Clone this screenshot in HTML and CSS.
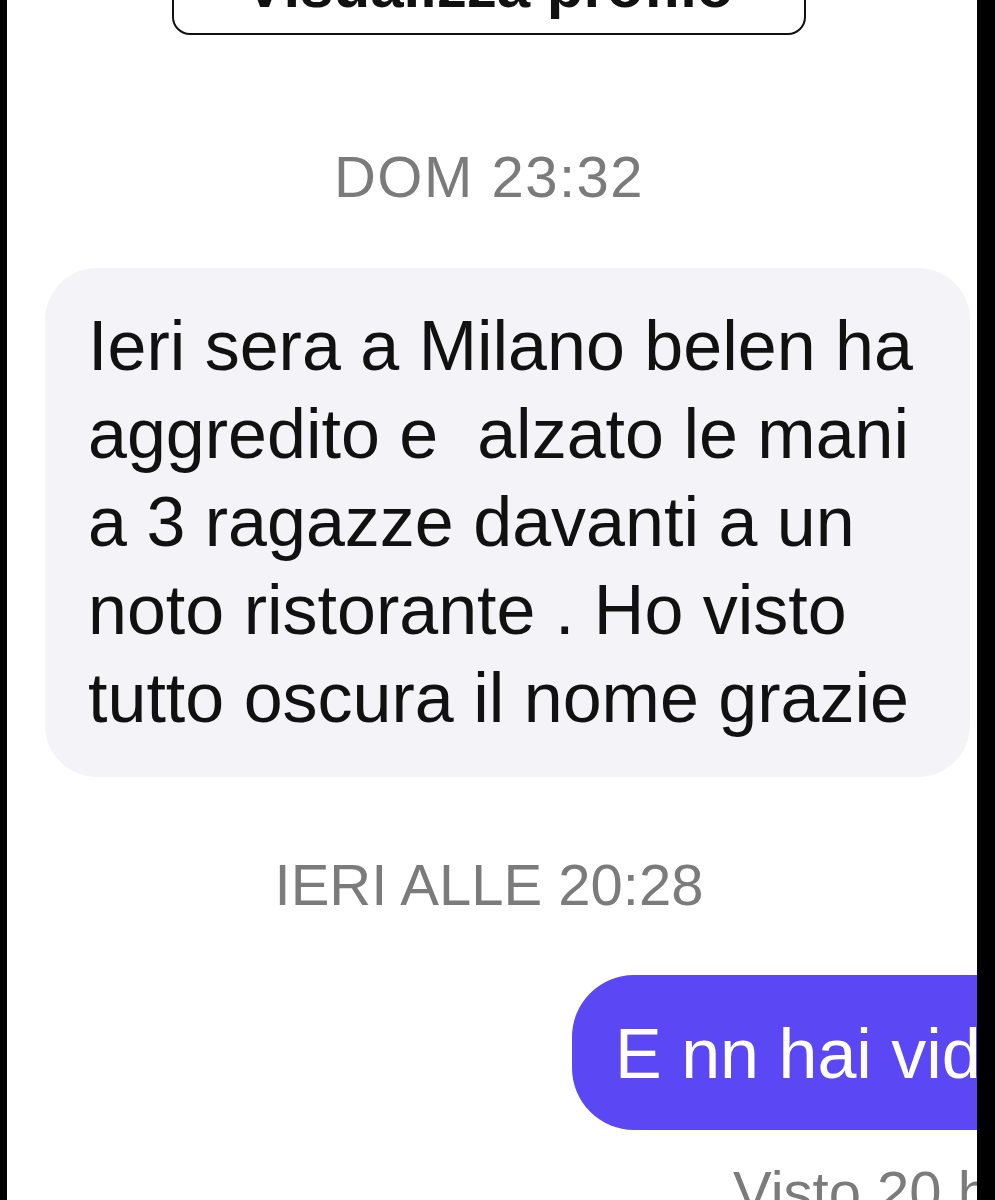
FILE: index.html
```html
<!DOCTYPE html>
<html lang="it">
<head>
    <meta charset="UTF-8">
    <meta name="viewport" content="width=device-width, initial-scale=1.0">
    <title>Messaggi</title>
    <link rel="stylesheet" href="styles.css">
</head>
<body>
    <div class="screen">
        <div class="profile-btn">Visualizza profilo</div>

        <div class="stamp stamp-first">DOM 23:32</div>

        <div class="bubble received">
            Ieri sera a Milano belen ha<br>
            aggredito e&nbsp; alzato le mani<br>
            a 3 ragazze davanti a un<br>
            noto ristorante . Ho visto<br>
            tutto oscura il nome grazie
        </div>

        <div class="stamp stamp-second">IERI ALLE 20:28</div>

        <div class="bubble sent">E nn hai video?</div>

        <div class="seen">Visto 20 h fa</div>
    </div>
</body>
</html>
```

FILE: styles.css
```css
html, body {
    margin: 0;
    padding: 0;
    background: #000;
    overflow: hidden;
}
body {
    font-family: "Liberation Sans", Arial, sans-serif;
}
.screen {
    height: 1200px;
    background: #fff;
    border-left: 7px solid #000;
    border-right: 18px solid #000;
    overflow: hidden;
    display: flex;
    flex-direction: column;
    align-items: flex-start;
}
.profile-btn {
    align-self: center;
    box-sizing: border-box;
    width: 634px;
    margin-top: -45px;
    margin-left: -6px;
    padding: 0 0 16px;
    border: 2px solid #111;
    border-radius: 18px;
    font-size: 60px;
    line-height: 60px;
    font-weight: 600;
    color: #111;
    text-align: center;
}
.stamp {
    align-self: center;
    margin-left: -6px;
    font-size: 58px;
    line-height: 67px;
    color: #7b7b7b;
    white-space: nowrap;
}
.stamp-first {
    margin-top: 108px;
    letter-spacing: 1.5px;
}
.stamp-second {
    margin-top: 74px;
}
.bubble {
    font-size: 70px;
    line-height: 88px;
    white-space: nowrap;
}
.received {
    box-sizing: border-box;
    width: 925px;
    margin: 58px 0 0 38px;
    padding: 34px 0 35px 43px;
    background: #f4f4f8;
    border-radius: 52px;
    color: #111;
}
.sent {
    margin: 57px 0 0 565px;
    padding: 35px 60px 32px 43px;
    background: #5b47f3;
    border-radius: 62px;
    color: #fff;
}
.seen {
    margin: 28px 0 0 726px;
    font-size: 58px;
    line-height: 67px;
    color: #7b7b7b;
    white-space: nowrap;
}
```
